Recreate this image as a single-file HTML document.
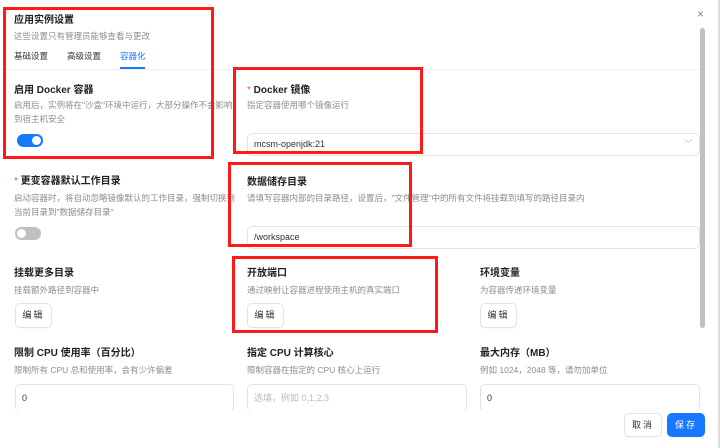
<!DOCTYPE html>
<html><head><meta charset="utf-8"><style>
*{box-sizing:border-box;margin:0;padding:0}
body{width:720px;height:448px;overflow:hidden;background:#fff;font-family:"Liberation Sans","Noto Sans CJK SC",sans-serif;position:relative;color:#1f1f1f}
.a{position:absolute;white-space:nowrap}
.t{font-size:10px;font-weight:bold;color:#1f1f1f}
.d{font-size:8.5px;color:#8c8c8c}
.s{color:#ff4d4f;font-weight:normal}
.in{position:absolute;border:1px solid #e3e3e3;border-radius:5px;height:23px;font-size:9px;padding:0 6px;line-height:21px;color:#333;background:#fff}
.btn{position:absolute;border:1px solid #e3e3e3;border-radius:5px;width:37px;height:25px;font-size:9px;text-align:center;line-height:23px;color:#333;letter-spacing:2px;box-shadow:0 1px 1px rgba(0,0,0,.03)}
.r{position:absolute;border:3px solid #ff1a1a}
.tg{position:absolute;width:26px;height:13px;border-radius:7px}
.tg i{position:absolute;top:2px;width:9px;height:9px;border-radius:50%;background:#fff}
</style></head><body>
<div class="a" style="left:14px;top:11px;font-size:10px;font-weight:bold">应用实例设置</div>
<div class="a d" style="left:14px;top:30px">这些设置只有管理员能够查看与更改</div>
<div class="a" style="left:14px;top:50px;font-size:8.5px;color:#333">基础设置</div>
<div class="a" style="left:67px;top:50px;font-size:8.5px;color:#333">高级设置</div>
<div class="a" style="left:120px;top:50px;font-size:8.5px;color:#1677ff">容器化</div>
<div class="a" style="left:120px;top:67px;width:25px;height:2px;background:#1677ff"></div>
<div class="a" style="left:0;top:69px;width:700px;height:1px;background:#f0f0f0"></div>
<div class="a" style="left:700px;top:28px;width:5px;height:300px;background:#c1c1c1;border-radius:3px"></div>
<div class="a" style="left:718px;top:0;width:2px;height:448px;background:#ddd"></div>
<div class="a" style="left:697px;top:7px;font-size:12px;color:#888">×</div>

<div class="a t" style="left:14px;top:81px">启用 Docker 容器</div>
<div class="a d" style="left:14px;top:99px">启用后，实例将在"沙盒"环境中运行，大部分操作不会影响</div>
<div class="a d" style="left:14px;top:113px">到宿主机安全</div>
<div class="tg" style="left:17px;top:134px;background:#1677ff"><i style="left:15px"></i></div>

<div class="a t" style="left:247px;top:81px"><span class="s">* </span>Docker 镜像</div>
<div class="a d" style="left:247px;top:99px">指定容器使用哪个镜像运行</div>
<div class="in" style="left:247px;top:133px;width:453px">mcsm-openjdk:21<span style="position:absolute;right:6px;color:#bbb;font-size:9px">﹀</span></div>

<div class="a t" style="left:14px;top:172px"><span class="s">* </span>更变容器默认工作目录</div>
<div class="a d" style="left:14px;top:192px">启动容器时，将自动忽略镜像默认的工作目录，强制切换到</div>
<div class="a d" style="left:14px;top:206px">当前目录到"数据储存目录"</div>
<div class="tg" style="left:15px;top:227px;background:#bfbfbf"><i style="left:2px"></i></div>

<div class="a t" style="left:247px;top:173px">数据储存目录</div>
<div class="a d" style="left:247px;top:192px">请填写容器内部的目录路径，设置后，"文件管理"中的所有文件将挂载到填写的路径目录内</div>
<div class="in" style="left:247px;top:226px;width:453px">/workspace</div>

<div class="a t" style="left:14px;top:264px">挂载更多目录</div>
<div class="a d" style="left:14px;top:284px">挂载额外路径到容器中</div>
<div class="btn" style="left:15px;top:303px">编辑</div>
<div class="a t" style="left:247px;top:264px">开放端口</div>
<div class="a d" style="left:247px;top:284px">通过映射让容器进程使用主机的真实端口</div>
<div class="btn" style="left:247px;top:303px">编辑</div>
<div class="a t" style="left:480px;top:264px">环境变量</div>
<div class="a d" style="left:480px;top:284px">为容器传递环境变量</div>
<div class="btn" style="left:480px;top:303px">编辑</div>

<div class="a t" style="left:14px;top:344px">限制 CPU 使用率（百分比）</div>
<div class="a d" style="left:14px;top:364px">限制所有 CPU 总和使用率，会有少许偏差</div>
<div class="in" style="left:15px;top:384px;width:219px;height:28px;line-height:26px">0</div>
<div class="a t" style="left:247px;top:344px">指定 CPU 计算核心</div>
<div class="a d" style="left:247px;top:364px">限制容器在指定的 CPU 核心上运行</div>
<div class="in" style="left:247px;top:384px;width:220px;height:28px;line-height:26px;color:#bbb">选填，例如 0,1,2,3</div>
<div class="a t" style="left:480px;top:344px">最大内存（MB）</div>
<div class="a d" style="left:480px;top:364px">例如 1024，2048 等，请勿加单位</div>
<div class="in" style="left:480px;top:384px;width:220px;height:28px;line-height:26px">0</div>
<div class="a" style="left:0;top:410px;width:716px;height:38px;background:#fff"></div>

<div class="btn" style="left:624px;top:413px;width:38px;height:24px">取消</div>
<div class="btn" style="left:667px;top:413px;width:38px;height:24px;background:#1677ff;border-color:#1677ff;color:#fff">保存</div>

<div class="r" style="left:3px;top:7px;width:211px;height:152px"></div>
<div class="r" style="left:233px;top:67px;width:190px;height:87px"></div>
<div class="r" style="left:228px;top:162px;width:184px;height:85px"></div>
<div class="r" style="left:232px;top:256px;width:206px;height:77px"></div>
</body></html>
